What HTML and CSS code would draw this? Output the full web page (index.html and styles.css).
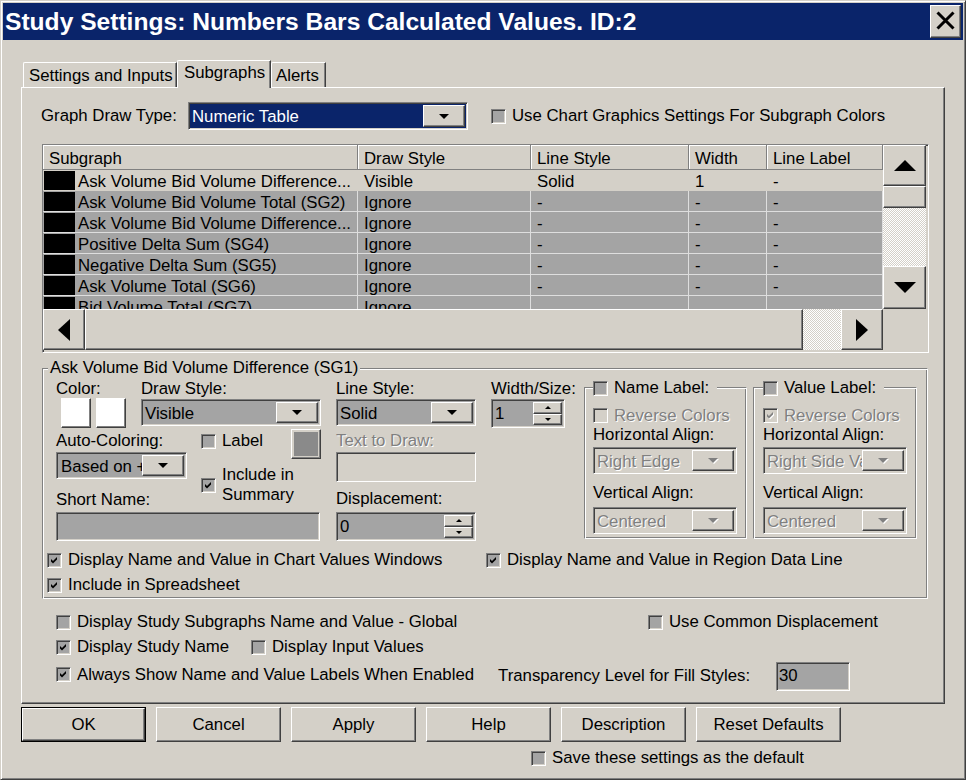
FILE: index.html
```html
<!DOCTYPE html>
<html>
<head>
<meta charset="utf-8">
<title>Study Settings</title>
<link rel="stylesheet" href="styles.css">
</head>
<body>
<div class="window">
  <div class="titlebar">
    <div class="title">Study Settings: Numbers Bars Calculated Values. ID:2</div>
    <div class="close raised"><svg width="19" height="19" viewBox="0 0 19 19"><path d="M1.5 1.5 L17.5 17.5 M17.5 1.5 L1.5 17.5" stroke="#000" stroke-width="3"/></svg></div>
  </div>
  <div class="client">
    <div class="tabs">
      <div class="tab t1">Settings and Inputs</div>
      <div class="tab sel">Subgraphs</div>
      <div class="tab t3">Alerts</div>
    </div>
    <div class="panel">
      <div class="row-type">
        <span class="lbl-type">Graph Draw Type:</span>
        <div class="combo sunken combo-type"><span class="txt">Numeric Table</span><span class="dd raised"><i class="arr"></i></span></div>
        <div class="chk chk-usechart"><span class="cb sunken"></span>Use Chart Graphics Settings For Subgraph Colors</div>
      </div>

      <div class="gridbox sunken">
        <div class="list">
          <div class="hdr">
            <div class="hc w1">Subgraph</div>
            <div class="hc w2">Draw Style</div>
            <div class="hc w3">Line Style</div>
            <div class="hc w4">Width</div>
            <div class="hc w5">Line Label</div>
          </div>
          <div class="tr first">
            <div class="td w1"><span class="sw"></span>Ask Volume Bid Volume Difference...</div>
            <div class="td w2">Visible</div>
            <div class="td w3">Solid</div>
            <div class="td w4">1</div>
            <div class="td w5">-</div>
          </div>
          <div class="tr">
            <div class="td w1"><span class="sw"></span>Ask Volume Bid Volume Total (SG2)</div>
            <div class="td w2">Ignore</div>
            <div class="td w3">-</div>
            <div class="td w4">-</div>
            <div class="td w5">-</div>
          </div>
          <div class="tr">
            <div class="td w1"><span class="sw"></span>Ask Volume Bid Volume Difference...</div>
            <div class="td w2">Ignore</div>
            <div class="td w3">-</div>
            <div class="td w4">-</div>
            <div class="td w5">-</div>
          </div>
          <div class="tr">
            <div class="td w1"><span class="sw"></span>Positive Delta Sum (SG4)</div>
            <div class="td w2">Ignore</div>
            <div class="td w3">-</div>
            <div class="td w4">-</div>
            <div class="td w5">-</div>
          </div>
          <div class="tr">
            <div class="td w1"><span class="sw"></span>Negative Delta Sum (SG5)</div>
            <div class="td w2">Ignore</div>
            <div class="td w3">-</div>
            <div class="td w4">-</div>
            <div class="td w5">-</div>
          </div>
          <div class="tr">
            <div class="td w1"><span class="sw"></span>Ask Volume Total (SG6)</div>
            <div class="td w2">Ignore</div>
            <div class="td w3">-</div>
            <div class="td w4">-</div>
            <div class="td w5">-</div>
          </div>
          <div class="tr">
            <div class="td w1"><span class="sw"></span>Bid Volume Total (SG7)</div>
            <div class="td w2">Ignore</div>
            <div class="td w3"></div>
            <div class="td w4"></div>
            <div class="td w5"></div>
          </div>
        </div>
        <div class="vscroll">
          <div class="sbtn raised up"><i class="a-up"></i></div>
          <div class="vthumb raised"></div>
          <div class="track"></div>
          <div class="sbtn raised down"><i class="a-dn"></i></div>
        </div>
        <div class="hscroll">
          <div class="sbtn raised lf"><i class="a-lf"></i></div>
          <div class="hthumb raised"></div>
          <div class="track htrack"></div>
          <div class="sbtn raised rt"><i class="a-rt"></i></div>
        </div>
        <div class="corner"></div>
      </div>

      <div class="group etched">
        <div class="legend">Ask Volume Bid Volume Difference (SG1)</div>
        <div class="cols">
          <div class="colA">
            <div class="a-top">
              <div class="colorblk">
                <div class="lbl">Color:</div>
                <div class="swatches"><span class="swatch raised"></span><span class="swatch raised"></span></div>
              </div>
              <div class="drawblk">
                <div class="lbl">Draw Style:</div>
                <div class="combo sunken combo-draw"><span class="txt">Visible</span><span class="dd raised"><i class="arr"></i></span></div>
              </div>
            </div>
            <div class="a-mid">
              <div class="autoblk">
                <div class="lbl lbl-auto">Auto-Coloring:</div>
                <div class="combo sunken combo-auto"><span class="txt">Based on +</span><span class="dd raised"><i class="arr"></i></span></div>
                <div class="lbl lbl-short">Short Name:</div>
              </div>
              <div class="chkblk">
                <div class="chk chk-label"><span class="cb sunken"></span>Label</div>
                <div class="chk chk-include"><span class="cb sunken"><svg class="tick" viewBox="0 0 13 13"><polygon points="3,5 5,7 9,3 9,5.6 5,9.6 3,7.6"/></svg></span><span>Include in<br>Summary</span></div>
              </div>
              <div class="colorbtn raised"><span></span></div>
            </div>
            <div class="field sunken short"></div>
          </div>

          <div class="colB">
            <div class="lbl">Line Style:</div>
            <div class="combo sunken combo-line"><span class="txt">Solid</span><span class="dd raised"><i class="arr"></i></span></div>
            <div class="lbl dis lbl-text">Text to Draw:</div>
            <div class="field sunken textdraw"></div>
            <div class="lbl lbl-disp">Displacement:</div>
            <div class="spin sunken spin-disp"><span class="txt">0</span><span class="sbs"><span class="sb raised"><i class="s-up"></i></span><span class="sb raised"><i class="s-dn"></i></span></span></div>
          </div>

          <div class="colC">
            <div class="lbl">Width/Size:</div>
            <div class="spin sunken spin-width"><span class="txt">1</span><span class="sbs"><span class="sb raised"><i class="s-up"></i></span><span class="sb raised"><i class="s-dn"></i></span></span></div>
          </div>

          <div class="subbox etched namebox">
            <div class="subleg"><span class="cb sunken"></span>Name Label:</div>
            <div class="chk dis chk-rev"><span class="cb sunken off"></span>Reverse Colors</div>
            <div class="lbl19">Horizontal Align:</div>
            <div class="combo sunken off combo-h"><span class="txt">Right Edge</span><span class="dd raised"><i class="arr"></i></span></div>
            <div class="lbl19 lbl-v">Vertical Align:</div>
            <div class="combo sunken off combo-v"><span class="txt">Centered</span><span class="dd raised"><i class="arr"></i></span></div>
          </div>

          <div class="subbox etched valuebox">
            <div class="subleg"><span class="cb sunken"></span>Value Label:</div>
            <div class="chk dis chk-rev"><span class="cb sunken off"><svg class="tick" viewBox="0 0 13 13"><polygon points="3,5 5,7 9,3 9,5.6 5,9.6 3,7.6"/></svg></span>Reverse Colors</div>
            <div class="lbl19">Horizontal Align:</div>
            <div class="combo sunken off combo-h"><span class="txt">Right Side Value</span><span class="dd raised"><i class="arr"></i></span></div>
            <div class="lbl19 lbl-v">Vertical Align:</div>
            <div class="combo sunken off combo-v"><span class="txt">Centered</span><span class="dd raised"><i class="arr"></i></span></div>
          </div>
        </div>

        <div class="grow g1">
          <div class="chk gw1"><span class="cb sunken"><svg class="tick" viewBox="0 0 13 13"><polygon points="3,5 5,7 9,3 9,5.6 5,9.6 3,7.6"/></svg></span>Display Name and Value in Chart Values Windows</div>
          <div class="chk"><span class="cb sunken"><svg class="tick" viewBox="0 0 13 13"><polygon points="3,5 5,7 9,3 9,5.6 5,9.6 3,7.6"/></svg></span>Display Name and Value in Region Data Line</div>
        </div>
        <div class="grow g2">
          <div class="chk"><span class="cb sunken"><svg class="tick" viewBox="0 0 13 13"><polygon points="3,5 5,7 9,3 9,5.6 5,9.6 3,7.6"/></svg></span>Include in Spreadsheet</div>
        </div>
      </div>

      <div class="prow p1">
        <div class="chk pw1"><span class="cb sunken"></span>Display Study Subgraphs Name and Value - Global</div>
        <div class="chk"><span class="cb sunken"></span>Use Common Displacement</div>
      </div>
      <div class="prow p2">
        <div class="chk pw2"><span class="cb sunken"><svg class="tick" viewBox="0 0 13 13"><polygon points="3,5 5,7 9,3 9,5.6 5,9.6 3,7.6"/></svg></span>Display Study Name</div>
        <div class="chk"><span class="cb sunken"></span>Display Input Values</div>
      </div>
      <div class="prow p3">
        <div class="chk pw3"><span class="cb sunken"><svg class="tick" viewBox="0 0 13 13"><polygon points="3,5 5,7 9,3 9,5.6 5,9.6 3,7.6"/></svg></span>Always Show Name and Value Labels When Enabled</div>
        <div class="lbl transp">Transparency Level for Fill Styles:</div>
        <div class="field sunken transfield">30</div>
      </div>
    </div>

    <div class="buttons">
      <div class="btn default"><span class="raised">OK</span></div>
      <div class="btn"><span class="raised">Cancel</span></div>
      <div class="btn"><span class="raised">Apply</span></div>
      <div class="btn"><span class="raised">Help</span></div>
      <div class="btn"><span class="raised">Description</span></div>
      <div class="btn wide"><span class="raised">Reset Defaults</span></div>
    </div>
    <div class="chk saverow"><span class="cb sunken"></span>Save these settings as the default</div>
  </div>
</div>
</body>
</html>
```

FILE: styles.css
```css
* { box-sizing: border-box; }
html, body { margin: 0; padding: 0; }
body {
  font-family: "Liberation Sans", Arial, sans-serif;
  font-size: 16.8px;
  line-height: 20px;
  color: #000;
  background: #d4d0c8;
}

/* 3D edges */
.raised {
  background: #d4d0c8;
  border: 1px solid;
  border-color: #fff #404040 #404040 #fff;
  box-shadow: inset -1px -1px #808080;
}
.sunken {
  border: 1px solid;
  border-color: #808080 #fff #fff #808080;
  box-shadow: inset 1px 1px #404040, inset -1px -1px #d4d0c8;
}
.etched {
  border: 1px solid;
  border-color: #808080 #fff #fff #808080;
  box-shadow: inset 1px 1px #fff, inset -1px -1px #808080;
}

.window {
  width: 966px;
  height: 780px;
  background: #d4d0c8;
  border: 1px solid;
  border-color: #d4d0c8 #404040 #404040 #d4d0c8;
  box-shadow: inset 1px 1px #fff, inset -1px -1px #808080;
  padding: 2px;
  display: flex;
  flex-direction: column;
}

.titlebar {
  height: 37px;
  background: #0a246a;
  display: flex;
  align-items: center;
  padding-left: 2px;
}
.title {
  flex: 1;
  color: #fff;
  font-weight: bold;
  font-size: 24.6px;
  line-height: 30px;
  white-space: nowrap;
}
.close {
  width: 31px;
  height: 33px;
  margin-right: 2px;
  display: flex;
  align-items: center;
  justify-content: center;
  padding-bottom: 3px;
}

.client {
  padding: 20px 0 0 18px;
}

/* tabs */
.tabs {
  display: flex;
  align-items: flex-end;
  height: 27px;
  margin-left: 2px;
}
.tab {
  height: 25px;
  padding: 3px 0 0 5px;
  border-top: 1px solid #fff;
  border-left: 1px solid #fff;
  border-right: 1px solid #404040;
  box-shadow: inset -1px 0 #808080;
  border-top-left-radius: 2px;
  white-space: nowrap;
}
.t1 { width: 154px; }
.t3 { width: 55px; padding-left: 4px; }
.tab.sel {
  width: 94px;
  height: 28px;
  margin-bottom: -1px;
  padding: 2px 0 0 6px;
  background: #d4d0c8;
  position: relative;
  z-index: 2;
}

.panel {
  width: 924px;
  height: 617px;
  border: 1px solid;
  border-color: #fff #404040 #404040 #fff;
  box-shadow: inset -1px -1px #808080;
  padding: 14px 14px 0 20px;
}

/* graph draw type row */
.row-type {
  display: flex;
  align-items: center;
  height: 28px;
}
.lbl-type { width: 147px; margin-left: -1px; }

.combo {
  display: flex;
  height: 27px;
  background: #a4a4a4;
  padding: 1px;
}
.combo .txt {
  flex: 1;
  min-width: 0;
  padding-left: 2px;
  line-height: 26px;
  white-space: nowrap;
  overflow: hidden;
}
.combo .dd {
  flex: none;
  width: 42px;
  display: flex;
  align-items: center;
  justify-content: center;
  margin: 1px 1px 1px 0;
}
.arr {
  display: block;
  width: 0;
  height: 0;
  border-left: 5px solid transparent;
  border-right: 5px solid transparent;
  border-top: 5px solid #000;
}
.combo-type {
  width: 280px;
  height: 28px;
  background: #0a246a;
}
.combo-type .txt { color: #fff; line-height: 25px; }

.chk {
  display: flex;
  align-items: center;
  height: 20px;
  padding-top: 2px;
  white-space: nowrap;
}
.cb {
  flex: none;
  width: 15px;
  height: 15px;
  margin-right: 6px;
  background: #a4a4a4;
  display: flex;
  align-items: center;
  justify-content: center;
}
.cb.off { background: #d4d0c8; }
.tick { width: 13px; height: 13px; fill: #000; display: block; }
.dis { color: #808080; text-shadow: 1px 1px 0 #fff; }
.dis .tick { fill: #808080; filter: drop-shadow(1px 1px 0 #fff); }
.chk-usechart { margin-left: 23px; padding-top: 0; }

/* subgraph list */
.gridbox {
  margin-top: 14px;
  width: 887px;
  height: 209px;
  display: grid;
  grid-template-columns: 840px 43px;
  grid-template-rows: 164px 41px;
  background: #d4d0c8;
}
.list { overflow: hidden; }
.hdr { display: flex; height: 25px; }
.hc {
  height: 25px;
  background: #d4d0c8;
  box-shadow: inset 1px 1px #fff;
  border-right: 1px solid #808080;
  border-bottom: 1px solid #808080;
  padding: 4px 0 0 6px;
  white-space: nowrap;
}
.w1 { width: 315px; }
.w2 { width: 173px; }
.w3 { width: 158px; }
.w4 { width: 78px; }
.w5 { width: 116px; }
.tr {
  display: flex;
  height: 21px;
  background: #a4a4a4;
  border-bottom: 1px solid #dedede;
}
.tr.first { background: #d4d0c8; border-bottom-color: #d4d0c8; }
.td {
  display: flex;
  align-items: flex-start;
  height: 20px;
  padding: 2px 0 0 6px;
  border-right: 1px solid #dedede;
  white-space: nowrap;
  overflow: hidden;
}
.tr.first .td { border-right-color: #d4d0c8; }
.td.w1 { padding-left: 1px; }
.sw {
  flex: none;
  width: 31px;
  height: 19px;
  margin-top: -1px;
  background: #000;
  margin-right: 3px;
}

.vscroll { display: flex; flex-direction: column; }
.sbtn {
  display: flex;
  align-items: center;
  justify-content: center;
  flex: none;
}
.sbtn.up { height: 41px; }
.vthumb { height: 22px; flex: none; }
.track {
  flex: 1;
  background: repeating-conic-gradient(#fff 0 25%, #d4d0c8 0 50%) 0 0 / 2px 2px;
}
.sbtn.down { height: 43px; }
.a-up, .a-dn, .a-lf, .a-rt { display: block; width: 0; height: 0; }
.a-up { border-left: 11px solid transparent; border-right: 11px solid transparent; border-bottom: 11px solid #000; }
.a-dn { border-left: 11px solid transparent; border-right: 11px solid transparent; border-top: 11px solid #000; }
.a-lf { border-top: 11px solid transparent; border-bottom: 11px solid transparent; border-right: 12px solid #000; }
.a-rt { border-top: 11px solid transparent; border-bottom: 11px solid transparent; border-left: 12px solid #000; }
.hscroll { display: flex; }
.sbtn.lf, .sbtn.rt { width: 42px; }
.hthumb { width: 718px; flex: none; }
.corner { background: #d4d0c8; }

/* group */
.group {
  margin-top: 15px;
  width: 886px;
  height: 231px;
  padding: 0 0 0 4px;
}
.legend {
  width: fit-content;
  margin: -11px 0 0 1px;
  padding: 0 2px;
  background: #d4d0c8;
  line-height: 20px;
}
.cols { display: flex; margin-left: 9px; }
.lbl { height: 20px; line-height: 22px; white-space: nowrap; }
.lbl19 { height: 19px; line-height: 21px; white-space: nowrap; }

.colA { width: 265px; flex: none; }
.a-top { display: flex; }
.colorblk { width: 70px; }
.swatches { display: flex; gap: 5px; margin-left: 5px; }
.swatch { width: 30px; height: 30px; background: #fff; }
.drawblk { width: 180px; margin-left: 15px; }
.combo-draw { margin-top: 1px; }

.a-mid { display: flex; align-items: flex-start; }
.autoblk { width: 131px; flex: none; }
.lbl-auto { margin-top: 2px; }
.combo-auto { margin-top: 2px; }
.combo-auto .txt { padding-left: 3px; }
.lbl-short { margin-top: 10px; }
.chkblk { width: 90px; flex: none; margin-left: 14px; }
.chk-label { margin-top: 2px; }
.chk-include { margin-top: 14px; height: 40px; }
.colorbtn {
  width: 30px;
  height: 30px;
  padding: 2px;
  margin-top: 1px;
  display: flex;
  flex: none;
}
.colorbtn span { flex: 1; background: #8a8a8a; }
.field { background: #a4a4a4; }
.short { width: 264px; height: 29px; margin-top: 3px; }

.colB { width: 140px; flex: none; margin-left: 15px; }
.combo-line { margin-top: 1px; }
.lbl-text { margin-top: 4px; }
.textdraw { height: 30px; margin-top: 2px; background: #d4d0c8; }
.lbl-disp { margin-top: 6px; }
.spin {
  display: flex;
  background: #a4a4a4;
  padding: 1px;
}
.spin .txt { flex: 1; padding-left: 2px; line-height: 26px; }
.sbs { flex: none; width: 29px; display: flex; flex-direction: column; margin: 1px 1px 1px 0; }
.sb { flex: 1; display: flex; align-items: center; justify-content: center; }
.s-up { display: block; width: 0; height: 0; border-left: 3px solid transparent; border-right: 3px solid transparent; border-bottom: 3px solid #000; }
.s-dn { display: block; width: 0; height: 0; border-left: 3px solid transparent; border-right: 3px solid transparent; border-top: 3px solid #000; }
.spin-disp { height: 29px; margin-top: 4px; }

.colC { width: 74px; flex: none; margin-left: 15px; }
.spin-width { height: 29px; margin-top: 1px; }

.subbox {
  flex: none;
  height: 152px;
  margin-top: 9px;
  padding-left: 8px;
}
.namebox { width: 163px; margin-left: 19px; }
.valuebox { width: 164px; margin-left: 6px; padding-left: 9px; }
.subleg {
  display: flex;
  align-items: center;
  width: fit-content;
  height: 20px;
  margin-top: -11px;
  padding: 2px 8px 0 0;
  background: #d4d0c8;
  white-space: nowrap;
}
.chk-rev { height: 19px; margin-top: 8px; }
.combo.off { background: #d4d0c8; }
.combo.off .txt { color: #808080; text-shadow: 1px 1px 0 #fff; }
.combo.off .arr { border-top-color: #808080; filter: drop-shadow(1px 1px 0 #fff); }
.combo-h { width: 144px; margin-top: 4px; }
.lbl-v { margin-top: 8px; }
.combo-v { width: 144px; margin-top: 6px; }

.grow { display: flex; height: 20px; }
.g1 { margin-top: 8px; }
.g2 { margin-top: 5px; }
.gw1 { width: 439px; }

/* rows under group */
.prow { display: flex; margin-left: 14px; }
.p1 { margin-top: 12px; height: 20px; }
.p2 { margin-top: 5px; height: 20px; }
.p3 { margin-top: 6px; height: 29px; align-items: center; }
.pw1 { width: 592px; }
.pw2 { width: 195px; }
.pw3 { width: 442px; margin-top: -4px; padding-top: 0; }
.transp { width: 278px; margin-top: -4px; }
.transfield { width: 74px; height: 29px; padding-left: 2px; line-height: 26px; }

/* buttons */
.buttons {
  display: flex;
  gap: 10px;
  margin-top: 3px;
}
.btn {
  width: 125px;
  height: 35px;
  display: flex;
}
.btn span {
  flex: 1;
  display: flex;
  align-items: center;
  justify-content: center;
}
.btn.default { border: 1px solid #000; }
.btn.wide { width: 145px; }
.saverow { margin: 6px 0 0 510px; padding-top: 0; }
```
